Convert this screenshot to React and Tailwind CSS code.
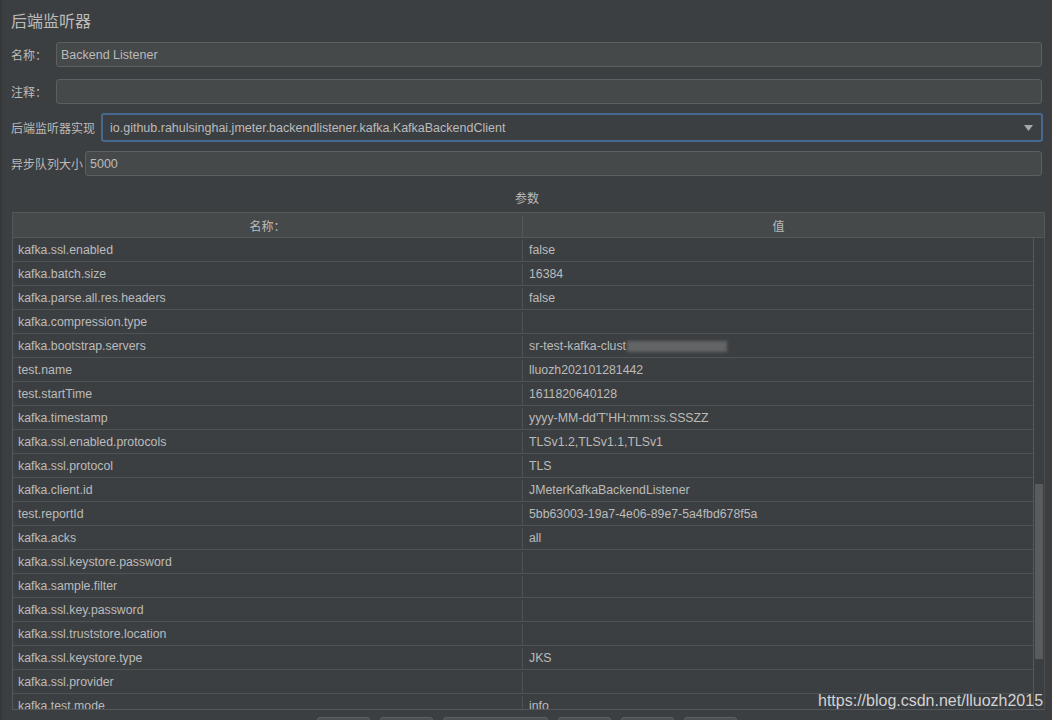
const rows = [
  ["kafka.ssl.enabled", "false"],
  ["kafka.batch.size", "16384"],
  ["kafka.parse.all.res.headers", "false"],
  ["kafka.compression.type", ""],
  ["kafka.bootstrap.servers", "BLUR"],
  ["test.name", "lluozh202101281442"],
  ["test.startTime", "1611820640128"],
  ["kafka.timestamp", "yyyy-MM-dd'T'HH:mm:ss.SSSZZ"],
  ["kafka.ssl.enabled.protocols", "TLSv1.2,TLSv1.1,TLSv1"],
  ["kafka.ssl.protocol", "TLS"],
  ["kafka.client.id", "JMeterKafkaBackendListener"],
  ["test.reportId", "5bb63003-19a7-4e06-89e7-5a4fbd678f5a"],
  ["kafka.acks", "all"],
  ["kafka.ssl.keystore.password", ""],
  ["kafka.sample.filter", ""],
  ["kafka.ssl.key.password", ""],
  ["kafka.ssl.truststore.location", ""],
  ["kafka.ssl.keystore.type", "JKS"],
  ["kafka.ssl.provider", ""],
  ["kafka.test.mode", "info"],
];

const buttonWidths = ["w-[53px]", "w-[53px]", "w-[105px]", "w-[53px]", "w-[53px]", "w-[53px]"];

function Field({ label, labelWidth, value }) {
  return (
    <div className="flex items-center">
      <span className={`${labelWidth} shrink-0 pt-[2px] text-[12px]`}>{label}</span>
      <div className="flex h-[25px] flex-1 items-center rounded-[3px] border border-[#5e6060] bg-[#45494a] px-[4px] pt-[2px] text-[12.5px]">
        {value}
      </div>
    </div>
  );
}

export default function App() {
  return (
    <div
      className="relative h-[720px] w-[1052px] overflow-hidden border-l-2 border-[#36383a] bg-[#3c3f41] text-[#bbbbbb]"
      style={{ fontFamily: '"Liberation Sans", "Noto Sans CJK SC", sans-serif' }}
    >
      <div className="pl-[9px] pr-[10px]">
        <h1 className="pt-[11px] text-[16px] leading-[22px]">后端监听器</h1>

        <div className="mt-[9px] space-y-[12px]">
          <Field label="名称：" labelWidth="w-[45px]" value="Backend Listener" />
          <Field label="注释：" labelWidth="w-[45px]" value="" />
        </div>

        <div className="mt-[9px] flex items-center">
          <span className="w-[90px] shrink-0 pt-[2px] text-[12px]">后端监听器实现</span>
          <div className="mr-[-1px] flex h-[29px] flex-1 items-center justify-between rounded-[3px] border-2 border-[#47698f] bg-[#3c3f41] pl-[7px] pr-[8px] text-[12.5px]">
            <span className="pt-[2px]">io.github.rahulsinghai.jmeter.backendlistener.kafka.KafkaBackendClient</span>
            <svg width="9" height="6" viewBox="0 0 9 6">
              <path d="M0 0h9L4.5 6z" fill="#a8a8a8" />
            </svg>
          </div>
        </div>

        <div className="mt-[9px]">
          <Field label="异步队列大小" labelWidth="w-[74px]" value="5000" />
        </div>
      </div>

      <p className="mt-[15px] text-center text-[12px] leading-[16px]">参数</p>

      <div className="ml-[10px] mt-[5px] w-[1033px]">
        <div className="flex h-[26px] border border-[#55585a] bg-[#45494a] pt-[3px] text-[12px]">
          <div className="flex w-[510px] items-center justify-center border-r border-[#55585a]">名称：</div>
          <div className="flex w-[511px] items-center justify-center">值</div>
        </div>
        <div className="flex h-[472px] overflow-hidden border-b border-l border-[#55585a]">
          <div className="w-[1021px] border-r border-[#55585a]">
            {rows.map(([name, value]) => (
              <div key={name} className="flex h-[24px] shrink-0 border-b border-[#4f5355] pt-[2px] text-[12.3px]">
                <div className="flex w-[510px] items-center border-r border-[#4f5355] pl-[5px]">{name}</div>
                <div className="flex flex-1 items-center pl-[6px]">
                  {value === "BLUR" ? (
                    <>
                      <span>sr-test-kafka-clust</span>
                      <span className="ml-[1px] inline-block h-[11px] w-[100px] bg-[#626466] blur-[1.5px]" />
                    </>
                  ) : (
                    value
                  )}
                </div>
              </div>
            ))}
          </div>
          <div className="w-[11px] border-r border-[#4a4d4f] pt-[246px]">
            <div className="ml-[1px] h-[175px] w-[8px] bg-[#595b5d]" />
          </div>
        </div>
      </div>

      <div className="mt-[7px] flex justify-center gap-[10px]">
        {buttonWidths.map((w, i) => (
          <div key={i} className={`${w} h-[24px] rounded-[3px] border border-[#5e6060] bg-[#4c5052]`} />
        ))}
      </div>

      <span className="absolute left-[816px] top-[691px] text-[16px] leading-[20px] text-[#d2d2d2]">
        https://blog.csdn.net/lluozh2015
      </span>
    </div>
  );
}
